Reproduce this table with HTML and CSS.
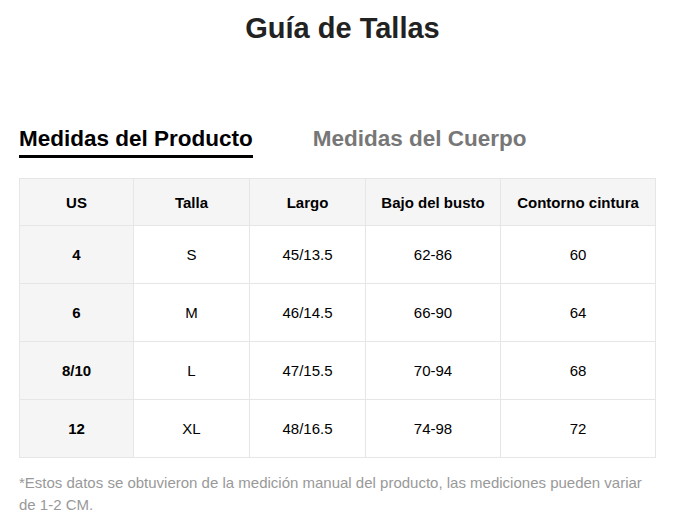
FILE: index.html
```html
<!DOCTYPE html>
<html lang="es">
<head>
<meta charset="utf-8">
<link rel="stylesheet" href="styles.css">
</head>
<body>
<div class="page">
  <h1 class="title">Guía de Tallas</h1>
  <div class="tabs">
    <div class="tab active">Medidas del Producto</div>
    <div class="tab">Medidas del Cuerpo</div>
  </div>
  <table class="sizes">
    <colgroup>
      <col class="c1"><col class="c2"><col class="c3"><col class="c4"><col class="c5">
    </colgroup>
    <thead>
      <tr><th>US</th><th>Talla</th><th>Largo</th><th>Bajo del busto</th><th>Contorno cintura</th></tr>
    </thead>
    <tbody>
      <tr><th>4</th><td>S</td><td>45/13.5</td><td>62-86</td><td>60</td></tr>
      <tr><th>6</th><td>M</td><td>46/14.5</td><td>66-90</td><td>64</td></tr>
      <tr><th>8/10</th><td>L</td><td>47/15.5</td><td>70-94</td><td>68</td></tr>
      <tr><th>12</th><td>XL</td><td>48/16.5</td><td>74-98</td><td>72</td></tr>
    </tbody>
  </table>
  <p class="note">*Estos datos se obtuvieron de la medición manual del producto, las mediciones pueden variar de 1-2 CM.</p>
</div>
</body>
</html>
```

FILE: styles.css
```css
html, body {
  margin: 0;
  padding: 0;
  background: #fff;
}
body {
  font-family: "Liberation Sans", Arial, sans-serif;
  color: #222;
}
.page {
  padding: 0 19px;
}
.title {
  margin: 0;
  padding: 12px 0 0 11px;
  font-size: 29px;
  line-height: 32px;
  font-weight: bold;
  text-align: center;
  color: #222;
}
.tabs {
  display: flex;
  gap: 60px;
  margin-top: 82px;
}
.tab {
  font-size: 22.5px;
  font-weight: bold;
  line-height: 26px;
  color: #777;
  padding-bottom: 3px;
  border-bottom: 3px solid transparent;
}
.tab.active {
  color: #000;
  border-bottom-color: #000;
}
.sizes {
  margin-top: 20px;
  width: 100%;
  border-collapse: collapse;
  font-size: 15px;
  color: #000;
  table-layout: fixed;
}
.c1 { width: 114px; }
.c2 { width: 116px; }
.c3 { width: 116px; }
.c4 { width: 135px; }
.c5 { width: 155px; }
.sizes th, .sizes td {
  border: 1px solid #e6e6e6;
  text-align: center;
  padding: 0;
}
.sizes thead th {
  height: 46px;
  background: #f5f5f5;
  font-weight: bold;
}
.sizes tbody th {
  background: #f5f5f5;
  font-weight: bold;
}
.sizes tbody th, .sizes tbody td {
  height: 57px;
}
.note {
  margin: 14px 0 0;
  font-size: 15px;
  line-height: 22px;
  color: #999;
}
```
